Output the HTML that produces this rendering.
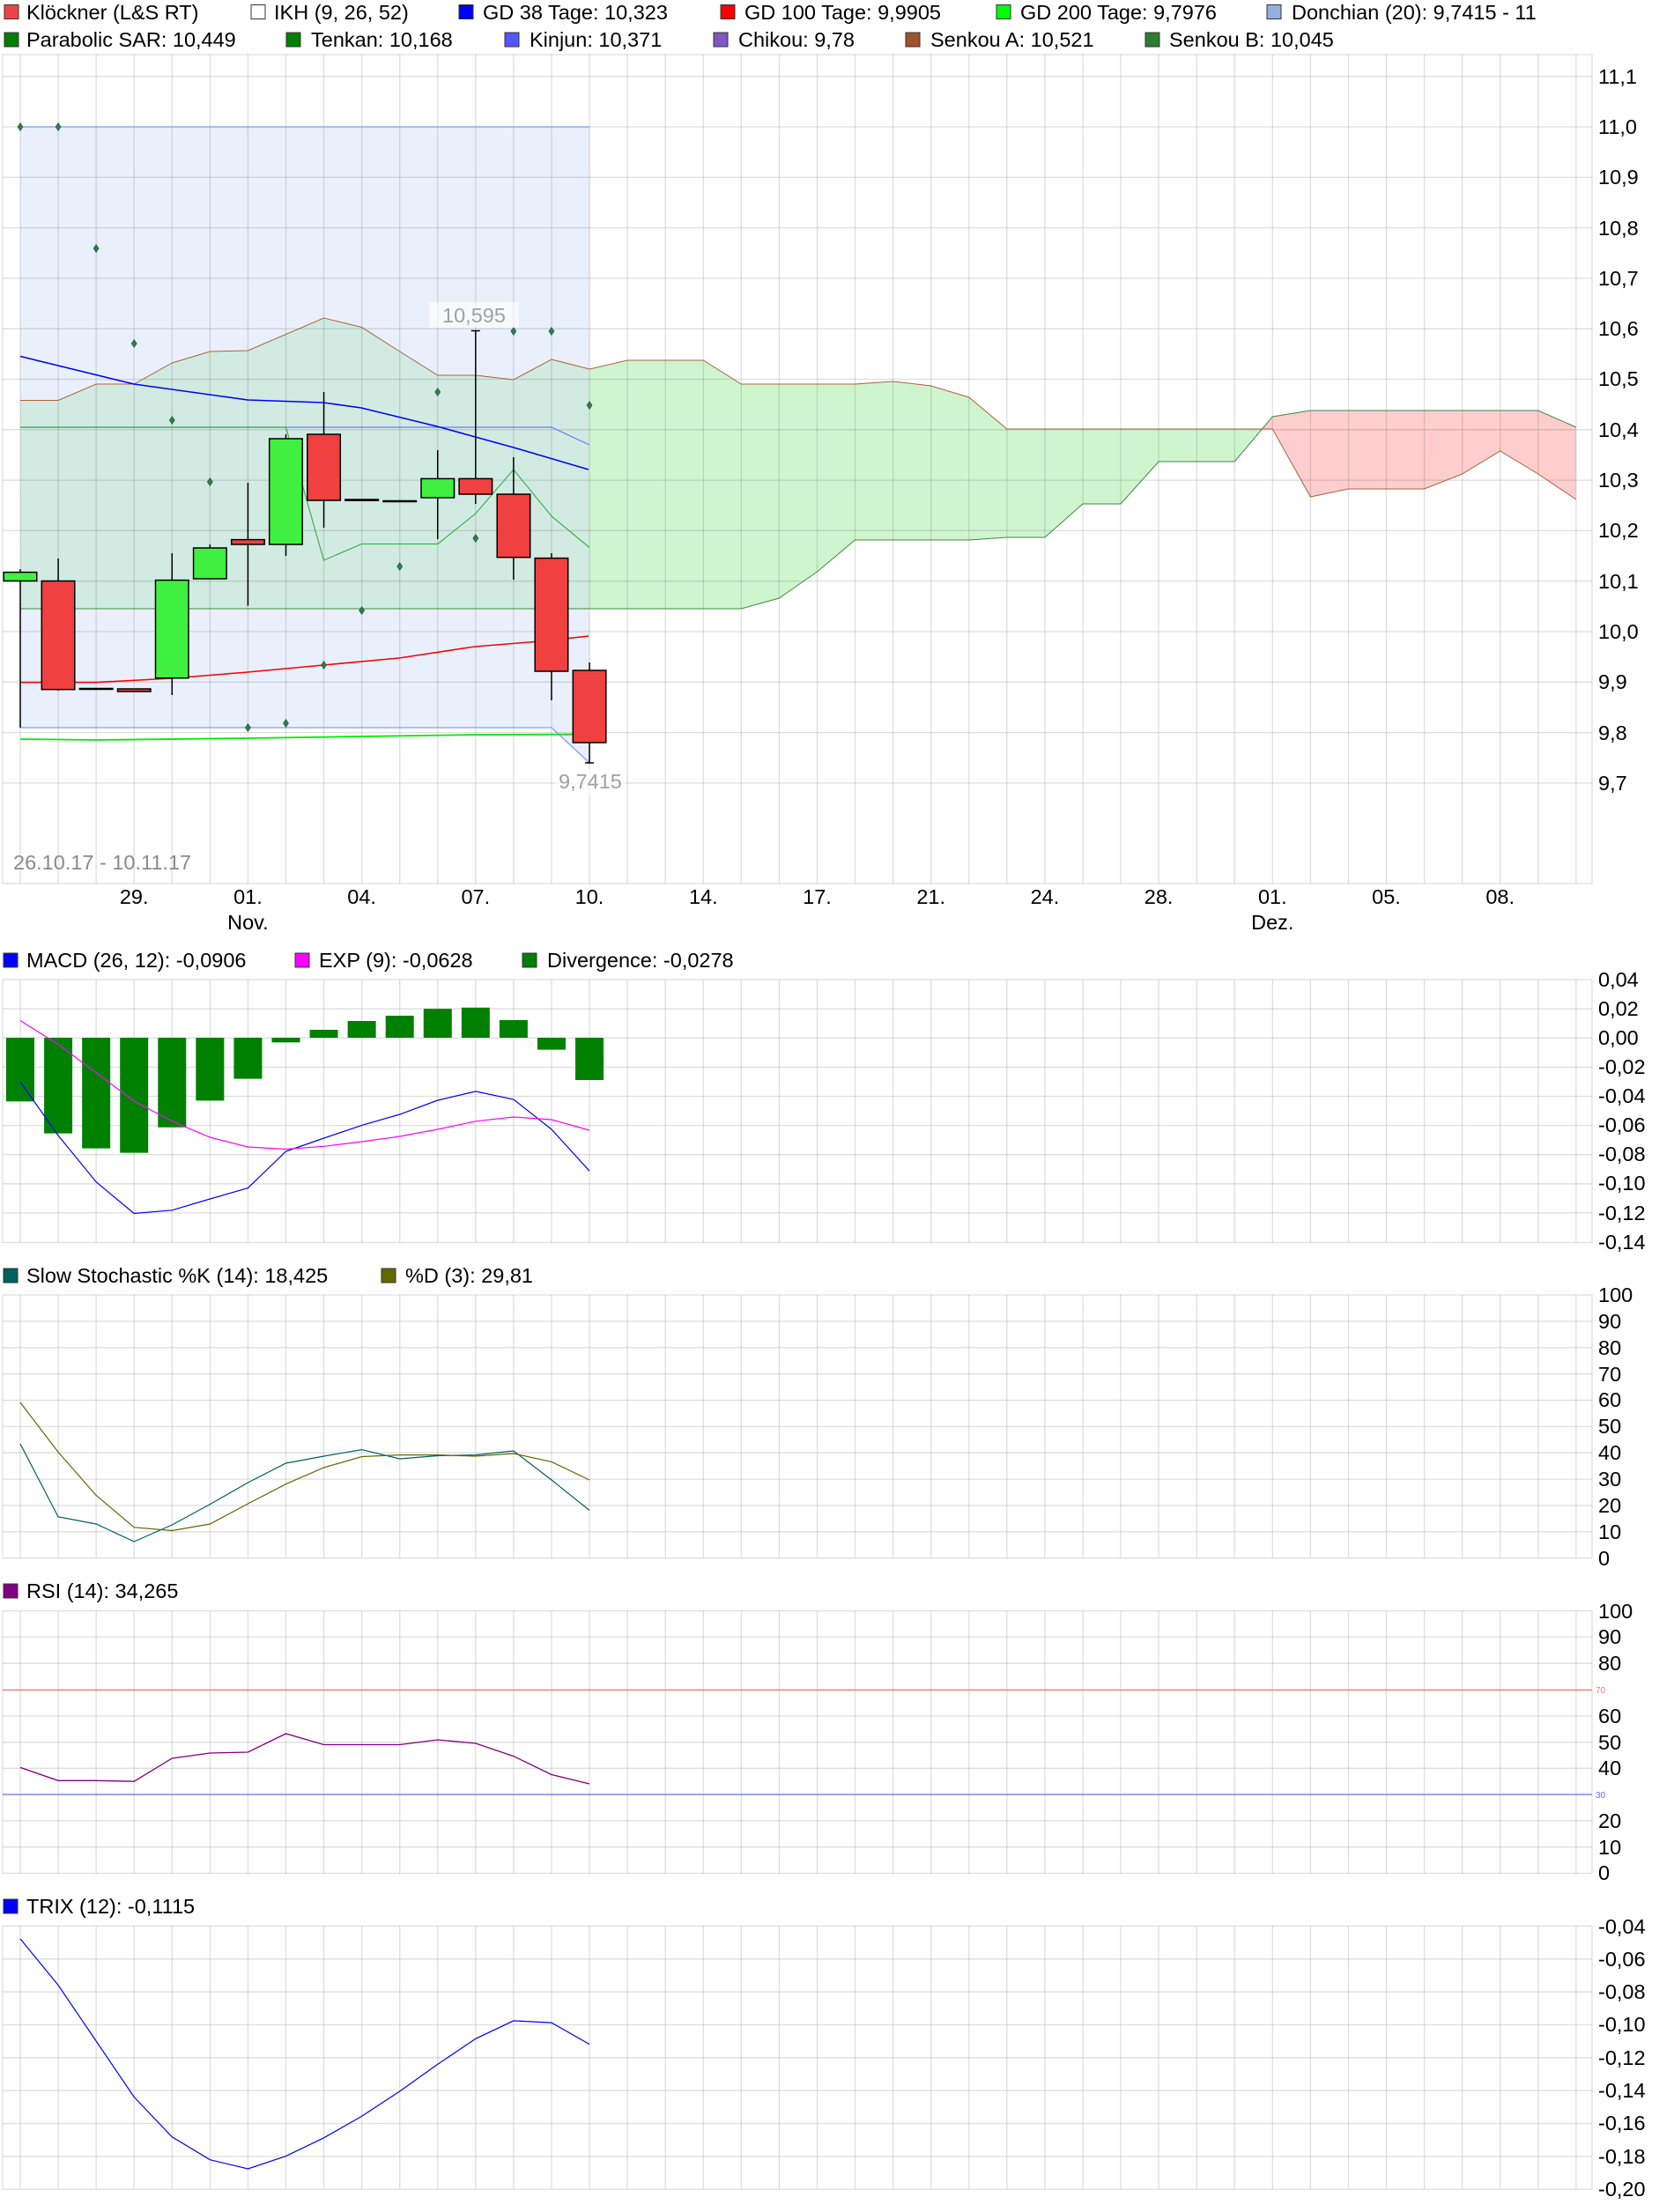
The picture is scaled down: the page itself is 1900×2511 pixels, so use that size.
<!DOCTYPE html>
<html><head><meta charset="utf-8"><style>
html,body{margin:0;padding:0;background:#fff;}
svg{display:block;}
text{font-family:"Liberation Sans",Arial,sans-serif;}
</style></head><body>
<svg width="1900" height="2511" viewBox="0 0 1900 2511" xmlns="http://www.w3.org/2000/svg">
<rect width="1900" height="2511" fill="#fff"/>

<!-- ===== LEGENDS ===== -->
<g font-size="23.5" fill="#000">
<rect x="5" y="5.5" width="16" height="16" fill="#f04444" stroke="#333" stroke-width="1"/><text x="30" y="22">Klöckner (L&amp;S RT)</text>
<rect x="285" y="5.5" width="16" height="16" fill="#fff" stroke="#333" stroke-width="1"/><text x="311" y="22">IKH (9, 26, 52)</text>
<rect x="521" y="5.5" width="16" height="16" fill="#0000ff" stroke="#333" stroke-width="1"/><text x="548" y="22">GD 38 Tage: 10,323</text>
<rect x="818" y="5.5" width="16" height="16" fill="#ff0000" stroke="#333" stroke-width="1"/><text x="845" y="22">GD 100 Tage: 9,9905</text>
<rect x="1131" y="5.5" width="16" height="16" fill="#00ff00" stroke="#333" stroke-width="1"/><text x="1158" y="22">GD 200 Tage: 9,7976</text>
<rect x="1438" y="5.5" width="16" height="16" fill="#94aedf" stroke="#333" stroke-width="1"/><text x="1466" y="22">Donchian (20): 9,7415 - 11</text>

<rect x="5" y="37" width="16" height="16" fill="#008000" stroke="#333" stroke-width="1"/><text x="30" y="53">Parabolic SAR: 10,449</text>
<rect x="325" y="37" width="16" height="16" fill="#008000" stroke="#333" stroke-width="1"/><text x="353" y="53">Tenkan: 10,168</text>
<rect x="573" y="37" width="16" height="16" fill="#5555ff" stroke="#333" stroke-width="1"/><text x="601" y="53">Kinjun: 10,371</text>
<rect x="810" y="37" width="16" height="16" fill="#7e57c2" stroke="#333" stroke-width="1"/><text x="838" y="53">Chikou: 9,78</text>
<rect x="1028" y="37" width="16" height="16" fill="#a0522d" stroke="#333" stroke-width="1"/><text x="1056" y="53">Senkou A: 10,521</text>
<rect x="1300" y="37" width="16" height="16" fill="#2e7d32" stroke="#333" stroke-width="1"/><text x="1327" y="53">Senkou B: 10,045</text>

<rect x="4" y="1082" width="16" height="16" fill="#0000ff" stroke="#333" stroke-width="1"/><text x="30" y="1098">MACD (26, 12): -0,0906</text>
<rect x="335" y="1082" width="16" height="16" fill="#ff00ff" stroke="#333" stroke-width="1"/><text x="362" y="1098">EXP (9): -0,0628</text>
<rect x="593" y="1082" width="16" height="16" fill="#008000" stroke="#333" stroke-width="1"/><text x="621" y="1098">Divergence: -0,0278</text>

<rect x="4" y="1440" width="16" height="16" fill="#006060" stroke="#333" stroke-width="1"/><text x="30" y="1456">Slow Stochastic %K (14): 18,425</text>
<rect x="433" y="1440" width="16" height="16" fill="#666600" stroke="#333" stroke-width="1"/><text x="460" y="1456">%D (3): 29,81</text>

<rect x="4" y="1798" width="16" height="16" fill="#800080" stroke="#333" stroke-width="1"/><text x="30" y="1814">RSI (14): 34,265</text>

<rect x="4" y="2156" width="16" height="16" fill="#0000ff" stroke="#333" stroke-width="1"/><text x="30" y="2172">TRIX (12): -0,1115</text>
</g>

<!-- ===== MAIN CHART ===== -->
<polygon fill="#cff5cf" points="23,454.5 66.07,454.5 109.14,436 152.21,436 195.28,412 238.35,399 281.42,398 324.49,379.5 367.56,361 410.63,371.5 453.7,399 496.77,426 539.84,426 582.91,431 625.98,408 669.05,419 712.1,409 755.2,409 798.3,409 841.3,436 884.4,436 927.5,436 970.5,436 1013.6,433 1056.7,438 1099.8,451 1142.8,487 1185.9,487 1229,487 1272,487 1315.1,487 1358.2,487 1401.2,487 1432.4,487 1401.2,524 1358.2,524 1315.1,524 1272,572 1229,572 1185.9,610 1142.8,610 1099.8,613 1056.7,613 1013.6,613 970.5,613 927.5,649 884.4,679 841.3,691 23,691"/>
<polygon fill="#fecece" points="1432.4,487 1444.3,473 1487.4,466 1530.5,466 1573.5,466 1616.6,466 1659.7,466 1702.7,466 1745.8,466 1788.9,485 1788.9,567 1745.8,538 1702.7,512 1659.7,538 1616.6,555 1573.5,555 1530.5,555 1487.4,564 1444.3,487"/>
<polygon fill="rgb(211,224,247)" fill-opacity="0.48" points="23,144 669,144 669,866 626,826 23,826"/>

<g stroke="#000" stroke-opacity="0.13" stroke-width="1.3" fill="none">
<path d="M3,86.7H1807M3,144H1807M3,201.3H1807M3,258.6H1807M3,315.9H1807M3,373.2H1807M3,430.5H1807M3,487.8H1807M3,545.1H1807M3,602.4H1807M3,659.7H1807M3,717H1807M3,774.3H1807M3,831.6H1807M3,888.9H1807"/>
<path d="M23,62V1003M66.07,62V1003M109.14,62V1003M152.21,62V1003M195.28,62V1003M238.35,62V1003M281.42,62V1003M324.49,62V1003M367.56,62V1003M410.63,62V1003M453.7,62V1003M496.77,62V1003M539.84,62V1003M582.91,62V1003M625.98,62V1003M669.05,62V1003M712.1,62V1003M755.2,62V1003M798.3,62V1003M841.3,62V1003M884.4,62V1003M927.5,62V1003M970.5,62V1003M1013.6,62V1003M1056.7,62V1003M1099.8,62V1003M1142.8,62V1003M1185.9,62V1003M1229,62V1003M1272,62V1003M1315.1,62V1003M1358.2,62V1003M1401.2,62V1003M1444.3,62V1003M1487.4,62V1003M1530.5,62V1003M1573.5,62V1003M1616.6,62V1003M1659.7,62V1003M1702.7,62V1003M1745.8,62V1003M1788.9,62V1003"/>
<rect x="3" y="62" width="1804" height="941"/>
</g>

<polyline fill="none" stroke="#a8643c" stroke-width="1" points="23,454.5 66.07,454.5 109.14,436 152.21,436 195.28,412 238.35,399 281.42,398 324.49,379.5 367.56,361 410.63,371.5 453.7,399 496.77,426 539.84,426 582.91,431 625.98,408 669.05,419 712.1,409 755.2,409 798.3,409 841.3,436 884.4,436 927.5,436 970.5,436 1013.6,433 1056.7,438 1099.8,451 1142.8,487 1185.9,487 1229,487 1272,487 1315.1,487 1358.2,487 1401.2,487 1444.3,487 1487.4,564 1530.5,555 1573.5,555 1616.6,555 1659.7,538 1702.7,512 1745.8,538 1788.9,567"/>
<polyline fill="none" stroke="#3d8a3d" stroke-width="1" points="23,691 841.3,691 884.4,679 927.5,649 970.5,613 1013.6,613 1056.7,613 1099.8,613 1142.8,610 1185.9,610 1229,572 1272,572 1315.1,524 1358.2,524 1401.2,524 1444.3,473 1487.4,466 1530.5,466 1573.5,466 1616.6,466 1659.7,466 1702.7,466 1745.8,466 1788.9,485"/>

<polyline fill="none" stroke="#7f9fe6" stroke-width="1.3" points="23,144 669,144"/>
<polyline fill="none" stroke="#7f9fe6" stroke-width="1.3" points="23,826 626,826 669,866"/>

<polyline fill="none" stroke="#6b7bff" stroke-width="1.2" points="23,485 626,485 669,505"/>
<polyline fill="none" stroke="#3cb04a" stroke-width="1.2" points="23,485 324.5,485 367.5,636 410.6,617.5 496.8,617.5 539.8,583 582.9,533 626,586 669,621.5"/>

<polyline fill="none" stroke="#0000ff" stroke-width="1.6" points="23,404.5 152,436 281,454 367,457 410,463 496,484 583,508 668,533"/>
<polyline fill="none" stroke="#ff0000" stroke-width="1.6" points="23,774.6 109,774.6 195,770 281,763 367,755 453,747 539,734 625,727 668,722"/>
<polyline fill="none" stroke="#00ee00" stroke-width="1.8" points="23,839 109,840 281,838 539,834 668,833.5"/>

<g fill="#2e7d4f" stroke="#1b4d2f" stroke-width="0.6">
<path d="M23,139.5l3,4.5l-3,4.5l-3,-4.5z"/>
<path d="M66.07,139.5l3,4.5l-3,4.5l-3,-4.5z"/>
<path d="M109.14,277.5l3,4.5l-3,4.5l-3,-4.5z"/>
<path d="M152.21,385.5l3,4.5l-3,4.5l-3,-4.5z"/>
<path d="M195.28,472.5l3,4.5l-3,4.5l-3,-4.5z"/>
<path d="M238.35,542.5l3,4.5l-3,4.5l-3,-4.5z"/>
<path d="M281.42,821.5l3,4.5l-3,4.5l-3,-4.5z"/>
<path d="M324.49,816.5l3,4.5l-3,4.5l-3,-4.5z"/>
<path d="M367.56,750.5l3,4.5l-3,4.5l-3,-4.5z"/>
<path d="M410.63,688.5l3,4.5l-3,4.5l-3,-4.5z"/>
<path d="M453.7,638.5l3,4.5l-3,4.5l-3,-4.5z"/>
<path d="M496.77,440.5l3,4.5l-3,4.5l-3,-4.5z"/>
<path d="M539.84,606.5l3,4.5l-3,4.5l-3,-4.5z"/>
<path d="M582.91,371.5l3,4.5l-3,4.5l-3,-4.5z"/>
<path d="M625.98,371.5l3,4.5l-3,4.5l-3,-4.5z"/>
<path d="M669.05,455.5l3,4.5l-3,4.5l-3,-4.5z"/>
</g>

<g stroke="#000" stroke-width="1.5">
<path d="M23,646V826M66.07,634V784M195.28,628V789M238.35,618V657M281.42,548V687.6M324.49,493V631M367.56,445V599M496.77,511V612M539.84,375.5V572M582.91,519V658M625.98,628V795M669.05,752V866M534.8,375.5H544.8M664,866H674"/>
<rect x="4.25" y="649.6" width="37.5" height="9.9" fill="#40f040"/>
<rect x="47.3" y="659.5" width="37.5" height="123.2" fill="#f04040"/>
<rect x="90.4" y="781.5" width="37.5" height="1" fill="#222"/>
<rect x="133.5" y="782" width="37.5" height="3" fill="#f04040"/>
<rect x="176.5" y="658.6" width="37.5" height="111.1" fill="#40f040"/>
<rect x="219.6" y="622" width="37.5" height="35" fill="#40f040"/>
<rect x="262.7" y="612.6" width="37.5" height="5.4" fill="#f04040"/>
<rect x="305.7" y="498" width="37.5" height="120" fill="#40f040"/>
<rect x="348.8" y="493" width="37.5" height="75" fill="#f04040"/>
<rect x="391.9" y="567" width="37.5" height="1.2" fill="#40f040"/>
<rect x="434.95" y="568.5" width="37.5" height="1" fill="#000"/>
<rect x="478" y="543.4" width="37.5" height="21.6" fill="#40f040"/>
<rect x="521.1" y="543.4" width="37.5" height="17.6" fill="#f04040"/>
<rect x="564.2" y="561" width="37.5" height="71.7" fill="#f04040"/>
<rect x="607.2" y="633.6" width="37.5" height="128.4" fill="#f04040"/>
<rect x="650.3" y="761" width="37.5" height="82" fill="#f04040"/>
</g>

<rect x="487" y="343" width="102" height="29" fill="#fff" fill-opacity="0.6"/>
<text x="538" y="366" font-size="23.5" fill="#a0a0a0" text-anchor="middle">10,595</text>
<rect x="630" y="873" width="80" height="29" fill="#fff" fill-opacity="0.6"/>
<text x="634" y="895" font-size="23.5" fill="#a0a0a0">9,7415</text>
<text x="15" y="987" font-size="23.5" fill="#8a8a8a">26.10.17 - 10.11.17</text>

<g font-size="23.5" fill="#000">
<text x="1814" y="95">11,1</text>
<text x="1814" y="152">11,0</text>
<text x="1814" y="209">10,9</text>
<text x="1814" y="267">10,8</text>
<text x="1814" y="324">10,7</text>
<text x="1814" y="381">10,6</text>
<text x="1814" y="438">10,5</text>
<text x="1814" y="496">10,4</text>
<text x="1814" y="553">10,3</text>
<text x="1814" y="610">10,2</text>
<text x="1814" y="668">10,1</text>
<text x="1814" y="725">10,0</text>
<text x="1814" y="782">9,9</text>
<text x="1814" y="840">9,8</text>
<text x="1814" y="897">9,7</text>
</g>
<g font-size="23.5" fill="#000" text-anchor="middle">
<text x="152.2" y="1026">29.</text>
<text x="281.4" y="1026">01.</text>
<text x="281.4" y="1055">Nov.</text>
<text x="410.6" y="1026">04.</text>
<text x="539.8" y="1026">07.</text>
<text x="669" y="1026">10.</text>
<text x="798.3" y="1026">14.</text>
<text x="927.5" y="1026">17.</text>
<text x="1056.7" y="1026">21.</text>
<text x="1185.9" y="1026">24.</text>
<text x="1315.1" y="1026">28.</text>
<text x="1444.3" y="1026">01.</text>
<text x="1444.3" y="1055">Dez.</text>
<text x="1573.5" y="1026">05.</text>
<text x="1702.7" y="1026">08.</text>
</g>

<g stroke="#000" stroke-opacity="0.13" stroke-width="1.3" fill="none">
<rect x="3" y="1112" width="1804" height="298.5"/>
<path d="M3,1145.2H1807M3,1178.3H1807M3,1211.4H1807M3,1244.5H1807M3,1277.6H1807M3,1310.7H1807M3,1343.8H1807M3,1376.9H1807"/>
<rect x="3" y="1470" width="1804" height="298.7"/>
<path d="M3,1499.9H1807M3,1529.8H1807M3,1559.6H1807M3,1589.5H1807M3,1619.4H1807M3,1649.2H1807M3,1679.1H1807M3,1709H1807M3,1738.8H1807"/>
<rect x="3" y="1828.6" width="1804" height="297.9"/>
<path d="M3,1858.4H1807M3,1888.2H1807M3,1948H1807M3,1977.8H1807M3,2007.3H1807M3,2066.9H1807M3,2096.7H1807"/>
<rect x="3" y="2186.4" width="1804" height="298.9"/>
<path d="M3,2223.8H1807M3,2261.1H1807M3,2298.5H1807M3,2335.8H1807M3,2373.2H1807M3,2410.6H1807M3,2447.9H1807"/>
<path id="vgl" d="M23,1112V1410.5M66.07,1112V1410.5M109.14,1112V1410.5M152.21,1112V1410.5M195.28,1112V1410.5M238.35,1112V1410.5M281.42,1112V1410.5M324.49,1112V1410.5M367.56,1112V1410.5M410.63,1112V1410.5M453.7,1112V1410.5M496.77,1112V1410.5M539.84,1112V1410.5M582.91,1112V1410.5M625.98,1112V1410.5M669.05,1112V1410.5M712.1,1112V1410.5M755.2,1112V1410.5M798.3,1112V1410.5M841.3,1112V1410.5M884.4,1112V1410.5M927.5,1112V1410.5M970.5,1112V1410.5M1013.6,1112V1410.5M1056.7,1112V1410.5M1099.8,1112V1410.5M1142.8,1112V1410.5M1185.9,1112V1410.5M1229,1112V1410.5M1272,1112V1410.5M1315.1,1112V1410.5M1358.2,1112V1410.5M1401.2,1112V1410.5M1444.3,1112V1410.5M1487.4,1112V1410.5M1530.5,1112V1410.5M1573.5,1112V1410.5M1616.6,1112V1410.5M1659.7,1112V1410.5M1702.7,1112V1410.5M1745.8,1112V1410.5M1788.9,1112V1410.5"/>
<use href="#vgl" transform="translate(0,358)"/>
<use href="#vgl" transform="translate(0,716.6)"/>
<use href="#vgl" transform="translate(0,1074.4)"/>
</g>

<g fill="#008000">
<rect x="7" y="1178" width="32" height="72.3"/>
<rect x="50.07" y="1178" width="32" height="108.6"/>
<rect x="93.14" y="1178" width="32" height="125.6"/>
<rect x="136.21" y="1178" width="32" height="130.6"/>
<rect x="179.28" y="1178" width="32" height="101.7"/>
<rect x="222.35" y="1178" width="32" height="71.4"/>
<rect x="265.42" y="1178" width="32" height="46.6"/>
<rect x="308.49" y="1178" width="32" height="5.3"/>
<rect x="351.56" y="1169" width="32" height="9"/>
<rect x="394.63" y="1159" width="32" height="19"/>
<rect x="437.7" y="1153" width="32" height="25"/>
<rect x="480.77" y="1145.2" width="32" height="32.8"/>
<rect x="523.84" y="1143.8" width="32" height="34.2"/>
<rect x="566.91" y="1158" width="32" height="20"/>
<rect x="609.98" y="1178" width="32" height="13.6"/>
<rect x="653.05" y="1178" width="32" height="48"/>
</g>
<polyline fill="none" stroke="#0000ff" stroke-width="1.2" points="23,1228 66.07,1289 109.14,1341.7 152.21,1377.5 195.28,1373.8 238.35,1361 281.42,1348.6 324.49,1307 367.56,1292 410.63,1277.4 453.7,1265 496.77,1249 539.84,1238.9 582.91,1248 625.98,1282 669.05,1329.3"/>
<polyline fill="none" stroke="#ff00ff" stroke-width="1.2" points="23,1158.5 66.07,1185.6 109.14,1217.7 152.21,1250 195.28,1272.8 238.35,1291 281.42,1302 324.49,1304.5 367.56,1301.3 410.63,1296 453.7,1290 496.77,1282 539.84,1272.8 582.91,1268 625.98,1271 669.05,1283"/>

<polyline fill="none" stroke="#006060" stroke-width="1.2" points="23,1639 66.07,1721.9 109.14,1730 152.21,1750 195.28,1731 238.35,1707.6 281.42,1683 324.49,1661 367.56,1653 410.63,1645.6 453.7,1656 496.77,1652.5 539.84,1651.6 582.91,1647 625.98,1680 669.05,1714.5"/>
<polyline fill="none" stroke="#666600" stroke-width="1.2" points="23,1592 66.07,1648.4 109.14,1697.5 152.21,1733.8 195.28,1737.5 238.35,1730 281.42,1707 324.49,1684.7 367.56,1666 410.63,1653.5 453.7,1651.6 496.77,1651.6 539.84,1653 582.91,1650 625.98,1659.4 669.05,1680"/>

<line x1="3" y1="1918.4" x2="1807" y2="1918.4" stroke="#ff6a6a" stroke-width="1.2"/>
<line x1="3" y1="2037" x2="1807" y2="2037" stroke="#6a6aff" stroke-width="1.2"/>
<polyline fill="none" stroke="#800080" stroke-width="1.3" points="23,2006.4 66.07,2021.3 109.14,2021.3 152.21,2022.2 195.28,1996 238.35,1990 281.42,1989 324.49,1968 367.56,1980.5 410.63,1980.5 453.7,1980.5 496.77,1975 539.84,1979 582.91,1993.6 625.98,2014.5 669.05,2025"/>

<polyline fill="none" stroke="#0000ff" stroke-width="1.2" points="23,2200.9 66.07,2253.5 109.14,2317 152.21,2380.5 195.28,2425.8 238.35,2451.7 281.42,2462 324.49,2447.6 367.56,2426.8 410.63,2402.3 453.7,2374 496.77,2343.3 539.84,2314.3 582.91,2293.9 625.98,2296.1 669.05,2320.6"/>

<g font-size="23.5" fill="#000">
<text x="1814" y="1120">0,04</text>
<text x="1814" y="1153">0,02</text>
<text x="1814" y="1186">0,00</text>
<text x="1814" y="1219">-0,02</text>
<text x="1814" y="1252">-0,04</text>
<text x="1814" y="1285">-0,06</text>
<text x="1814" y="1318">-0,08</text>
<text x="1814" y="1351">-0,10</text>
<text x="1814" y="1385">-0,12</text>
<text x="1814" y="1418">-0,14</text>

<text x="1814" y="1478">100</text>
<text x="1814" y="1508">90</text>
<text x="1814" y="1538">80</text>
<text x="1814" y="1568">70</text>
<text x="1814" y="1597">60</text>
<text x="1814" y="1627">50</text>
<text x="1814" y="1657">40</text>
<text x="1814" y="1687">30</text>
<text x="1814" y="1717">20</text>
<text x="1814" y="1747">10</text>
<text x="1814" y="1777">0</text>

<text x="1814" y="1837">100</text>
<text x="1814" y="1866">90</text>
<text x="1814" y="1896">80</text>
<text x="1814" y="1956">60</text>
<text x="1814" y="1986">50</text>
<text x="1814" y="2015">40</text>
<text x="1814" y="2075">20</text>
<text x="1814" y="2105">10</text>
<text x="1814" y="2134">0</text>

<text x="1814" y="2195">-0,04</text>
<text x="1814" y="2232">-0,06</text>
<text x="1814" y="2269">-0,08</text>
<text x="1814" y="2306">-0,10</text>
<text x="1814" y="2344">-0,12</text>
<text x="1814" y="2381">-0,14</text>
<text x="1814" y="2418">-0,16</text>
<text x="1814" y="2456">-0,18</text>
<text x="1814" y="2493">-0,20</text>
</g>
<text x="1811" y="1922" font-size="10" fill="#ff6a6a">70</text>
<text x="1811" y="2041" font-size="10" fill="#6a6aff">30</text>
</svg>
</body></html>
